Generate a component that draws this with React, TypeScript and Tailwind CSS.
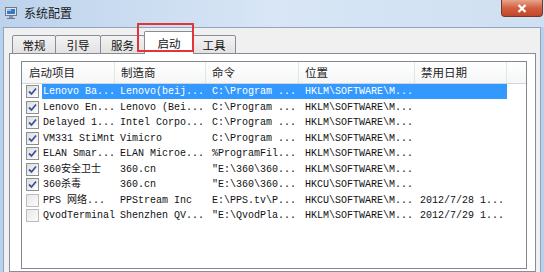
import React from "react";

type Row = { c: boolean; a: string; b: string; cmd: string; tail?: boolean; loc: string; d: string };

const rows: Row[] = [
  { c: true, a: "Lenovo Ba...", b: "Lenovo(beij...", cmd: "C:\\Program", tail: true, loc: "HKLM\\SOFTWARE\\M...", d: "" },
  { c: true, a: "Lenovo En...", b: "Lenovo (Bei...", cmd: "C:\\Program", tail: true, loc: "HKLM\\SOFTWARE\\M...", d: "" },
  { c: true, a: "Delayed 1...", b: "Intel Corpo...", cmd: "C:\\Program", tail: true, loc: "HKLM\\SOFTWARE\\M...", d: "" },
  { c: true, a: "VM331 StiMnt", b: "Vimicro", cmd: "C:\\Program", tail: true, loc: "HKLM\\SOFTWARE\\M...", d: "" },
  { c: true, a: "ELAN Smar...", b: "ELAN Microe...", cmd: "%ProgramFil...", loc: "HKLM\\SOFTWARE\\M...", d: "" },
  { c: true, a: "360安全卫士", b: "360.cn", cmd: "\"E:\\360\\360...", loc: "HKLM\\SOFTWARE\\M...", d: "" },
  { c: true, a: "360杀毒", b: "360.cn", cmd: "\"E:\\360\\360...", loc: "HKCU\\SOFTWARE\\M...", d: "" },
  { c: false, a: "PPS 网络...", b: "PPStream Inc", cmd: "E:\\PPS.tv\\P...", loc: "HKCU\\SOFTWARE\\M...", d: "2012/7/28 1..." },
  { c: false, a: "QvodTerminal", b: "Shenzhen QV...", cmd: "\"E:\\QvodPla...", loc: "HKLM\\SOFTWARE\\M...", d: "2012/7/29 1..." },
];

function Check({ on }: { on: boolean }) {
  return (
    <div
      className={
        "w-[13px] h-[13px] border flex items-center justify-center " +
        (on
          ? "border-[#8e8f8f] bg-gradient-to-br from-[#dcdcdc] to-[#ffffff]"
          : "border-[#bcbcbc] bg-gradient-to-br from-[#e8e8e8] to-[#fbfbfb]")
      }
    >
      {on && (
        <svg width="9" height="9" viewBox="0 0 9 9">
          <path d="M1 4.5 L3.5 7 L8 1.5" fill="none" stroke="#3a55a0" strokeWidth="1.8" />
        </svg>
      )}
    </div>
  );
}

function Tab({ label, w, selected }: { label: string; w: string; selected?: boolean }) {
  return (
    <div
      className={
        "flex justify-center border border-[#898c95] " +
        w +
        " " +
        (selected
          ? "h-[23px] bg-white border-b-0 -mx-[1px] relative z-10 pt-[3px] rounded-t-[2px]"
          : "h-[19px] bg-gradient-to-b from-[#f3f3f3] to-[#e2e2e2] -ml-px pt-[1px] rounded-t-[2px]")
      }
    >
      <span className="text-[11.5px] leading-[16px] text-[#111]">{label}</span>
    </div>
  );
}

export default function App() {
  const mono = "font-['Liberation_Mono','Noto_Sans_CJK_SC',monospace]";
  return (
    <div className="w-[544px] h-[272px] overflow-hidden relative flex flex-col bg-[#b9d1ea] font-['Noto_Sans_CJK_SC',sans-serif]">
      {/* title bar */}
      <div className="h-[27px] flex items-start bg-gradient-to-r from-[#bdd3ec] via-[#d8e6f5] to-[#cfe0f2] shrink-0">
        <svg className="ml-[5px] mt-[7px]" width="12" height="12" viewBox="0 0 12 12">
          <rect x="0.5" y="0.5" width="11" height="8" fill="#dfe6ee" stroke="#6a7a8c" />
          <rect x="2" y="2" width="8" height="5" fill="#3a78c8" />
          <rect x="2" y="2" width="4" height="2" fill="#8fc0f0" />
          <rect x="4" y="9" width="4" height="2" fill="#8a96a4" />
          <rect x="2" y="11" width="8" height="1" fill="#6a7a8c" />
        </svg>
        <span className="ml-[7px] mt-[5px] text-[12px] leading-[16px] text-[#1b1b1b]">系统配置</span>
        <div className="ml-auto mr-[1px] w-[42px] h-[17px] rounded-b-[4px] border border-t-0 border-[#7a3526] bg-gradient-to-b from-[#e6a48c] via-[#d1603f] to-[#c2452a] flex items-center justify-center">
          <svg width="10" height="9" viewBox="0 0 10 9">
            <path d="M1.5 1 L8.5 8 M8.5 1 L1.5 8" stroke="#ffffff" strokeWidth="2.2" />
          </svg>
        </div>
      </div>

      {/* client */}
      <div className="flex-1 mx-[3px] border-t border-l border-r border-[#8fa5bf] bg-[#f0f0f0] flex flex-col pt-[3px]">
        {/* tabs */}
        <div className="flex items-end h-[23px] pl-[9px] relative z-10 -mb-px">
          <Tab label="常规" w="w-[44px]" />
          <Tab label="引导" w="w-[46px]" />
          <Tab label="服务" w="w-[45px]" />
          <Tab label="启动" w="w-[50px]" selected />
          <Tab label="工具" w="w-[44px]" />
        </div>
        {/* panel */}
        <div className="flex-1 ml-[5px] mr-[4px] border border-[#898c95] bg-white pt-[7px] pl-[11px]">
          <div className="w-[506px] h-[208px] border border-[#828790] bg-white flex flex-col">
            {/* header */}
            <div className="h-[22px] flex border-b border-[#d5d5d5] bg-gradient-to-b from-[#ffffff] to-[#f5f6f7] text-[11.5px] text-[#1e1e1e] shrink-0">
              <div className="w-[93px] border-r border-[#e3e5e8] pl-[7px] flex items-center">启动项目</div>
              <div className="w-[91px] border-r border-[#e3e5e8] pl-[6px] flex items-center">制造商</div>
              <div className="w-[93px] border-r border-[#e3e5e8] pl-[6px] flex items-center">命令</div>
              <div className="w-[116px] border-r border-[#e3e5e8] pl-[6px] flex items-center">位置</div>
              <div className="w-[92px] border-r border-[#e3e5e8] pl-[6px] flex items-center">禁用日期</div>
              <div className="flex-1" />
            </div>
            {/* rows */}
            <div className={"flex flex-col text-[10px] text-[#111] " + mono}>
              {rows.map((r, i) => (
                <div key={i} className="h-[15.5px] flex items-center">
                  <div className="w-[20px] pl-[4px] shrink-0">
                    <Check on={r.c} />
                  </div>
                  <div
                    className={
                      "w-[465px] h-[15px] flex items-center whitespace-nowrap " +
                      (i === 0 ? "bg-[#3399ff] text-white" : "")
                    }
                  >
                    <div className="w-[73px] pl-[1px] shrink-0 overflow-hidden">{r.a}</div>
                    <div className="w-[91px] pl-[5px] shrink-0 overflow-hidden">{r.b}</div>
                    <div className="w-[93px] pl-[6px] shrink-0 flex">
                      <span>{r.cmd}</span>
                      {r.tail && <span className="ml-[6px]">...</span>}
                    </div>
                    <div className="w-[116px] pl-[6px] shrink-0 overflow-hidden">{r.loc}</div>
                    <div className="w-[92px] pl-[5px] shrink-0 overflow-hidden">{r.d}</div>
                  </div>
                </div>
              ))}
            </div>
          </div>
        </div>
      </div>

      {/* red highlight rectangle annotation */}
      <div className="absolute left-[137px] top-[23px] w-[57px] h-[29px] border-2 border-[#e3343a] z-20" />
    </div>
  );
}
